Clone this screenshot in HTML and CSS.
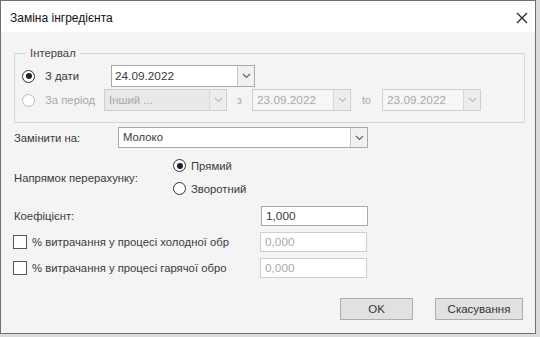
FILE: index.html
```html
<!DOCTYPE html>
<html lang="uk">

<head>
    <meta charset="UTF-8">
    <meta name="viewport" content="width=device-width, initial-scale=1.0">
    <title>Заміна інгредієнта</title>
    <link rel="stylesheet" href="styles.css">
</head>

<body>
    <div class="window">
        <div class="titlebar">
            <span class="title">Заміна інгредієнта</span>
            <span class="close">
                <svg width="12" height="12" viewBox="0 0 12 12">
                    <path d="M1 1 L11 11 M11 1 L1 11" stroke="#222" stroke-width="1.2" fill="none" />
                </svg>
            </span>
        </div>
        <div class="content">
            <fieldset class="interval">
                <legend>Інтервал</legend>
                <!-- з дати -->
                <div class="row">
                    <span class="radio checked"></span>
                    <span class="radio-label">З дати</span>
                    <div class="combo date-main">
                        <span class="combo-text">24.09.2022</span>
                        <span class="combo-btn">
                            <svg width="9" height="6" viewBox="0 0 9 6"><path d="M1 1 L4.5 4.5 L8 1" stroke="#666" stroke-width="1.2" fill="none" /></svg>
                        </span>
                    </div>
                </div>
                <!-- за період -->
                <div class="row disabled">
                    <span class="radio"></span>
                    <span class="radio-label">За період</span>
                    <div class="combo period">
                        <span class="combo-text">Інший ...</span>
                        <span class="combo-btn">
                            <svg width="9" height="6" viewBox="0 0 9 6"><path d="M1 1 L4.5 4.5 L8 1" stroke="#bbb" stroke-width="1.2" fill="none" /></svg>
                        </span>
                    </div>
                    <span class="sep">з</span>
                    <div class="combo date-small">
                        <span class="combo-text">23.09.2022</span>
                        <span class="combo-btn">
                            <svg width="9" height="6" viewBox="0 0 9 6"><path d="M1 1 L4.5 4.5 L8 1" stroke="#bbb" stroke-width="1.2" fill="none" /></svg>
                        </span>
                    </div>
                    <span class="sep to">to</span>
                    <div class="combo date-small">
                        <span class="combo-text">23.09.2022</span>
                        <span class="combo-btn">
                            <svg width="9" height="6" viewBox="0 0 9 6"><path d="M1 1 L4.5 4.5 L8 1" stroke="#bbb" stroke-width="1.2" fill="none" /></svg>
                        </span>
                    </div>
                </div>
            </fieldset>

            <div class="field replace">
                <span class="label">Замінити на:</span>
                <div class="combo product">
                    <span class="combo-text">Молоко</span>
                    <span class="combo-btn">
                        <svg width="9" height="6" viewBox="0 0 9 6"><path d="M1 1 L4.5 4.5 L8 1" stroke="#666" stroke-width="1.2" fill="none" /></svg>
                    </span>
                </div>
            </div>

            <div class="field direction">
                <span class="label">Напрямок перерахунку:</span>
                <div class="radio-group">
                    <div class="radio-item">
                        <span class="radio checked"></span>
                        <span>Прямий</span>
                    </div>
                    <div class="radio-item">
                        <span class="radio"></span>
                        <span>Зворотний</span>
                    </div>
                </div>
            </div>

            <div class="field coef">
                <span class="label">Коефіцієнт:</span>
                <div class="input">1,000</div>
            </div>

            <div class="field check-row">
                <span class="checkbox"></span>
                <span class="check-label">% витрачання у процесі холодної обр</span>
                <div class="input disabled">0,000</div>
            </div>
            <div class="field check-row">
                <span class="checkbox"></span>
                <span class="check-label">% витрачання у процесі гарячої обро</span>
                <div class="input disabled">0,000</div>
            </div>

            <div class="buttons">
                <button type="button" class="btn ok">OK</button>
                <button type="button" class="btn cancel">Скасування</button>
            </div>
        </div>
    </div>
</body>

</html>
```

FILE: styles.css
```css
html,
body {
    margin: 0;
    padding: 0;
    width: 540px;
    height: 337px;
    overflow: hidden;
    background: #dcdcdc;
    font-family: "Liberation Sans", Arial, sans-serif;
    font-size: 11.3px;
    color: #3a3a3a;
}

.window {
    width: 536px;
    height: 334px;
    box-sizing: border-box;
    border: 1px solid #707070;
    background: #f4f4f4;
    display: flex;
    flex-direction: column;
}

.titlebar {
    height: 31px;
    background: #fff;
    display: flex;
    align-items: center;
    justify-content: space-between;
    padding: 0 9px 0 9px;
    flex-shrink: 0;
}

.title {
    font-size: 12px;
    color: #111;
    margin-top: 2px;
}

.close {
    display: flex;
    margin-top: 3px;
    margin-right: -2px;
}

.content {
    padding: 15px 0 0 13px;
    flex: 1;
}

/* интервал */
.interval {
    width: 511px;
    height: 76px;
    box-sizing: border-box;
    margin: 0;
    padding: 6px 0 0 7px;
    border: 1px solid #d6d6d6;
}

.interval legend {
    padding: 0 4px;
    margin-left: 4px;
    color: #444;
}

.row {
    display: flex;
    align-items: center;
    height: 22px;
    margin-bottom: 2px;
}

.radio {
    width: 11px;
    height: 11px;
    border: 1px solid #333;
    border-radius: 50%;
    background: #fff;
    position: relative;
    flex-shrink: 0;
}

.radio.checked::after {
    content: "";
    position: absolute;
    left: 2.5px;
    top: 2.5px;
    width: 6px;
    height: 6px;
    border-radius: 50%;
    background: #222;
}

.radio-label {
    margin-left: 10px;
    width: 66px;
}

.row.disabled {
    color: #a8a8a8;
}

.row.disabled .radio {
    border-color: #bcbcbc;
}

.row.disabled .radio-label {
    width: 59px;
}

.combo {
    display: flex;
    height: 22px;
    box-sizing: border-box;
    border: 1px solid #a9a9a9;
    background: #fff;
}

.combo-text {
    flex: 1;
    padding-left: 4px;
    line-height: 20px;
    white-space: nowrap;
    overflow: hidden;
}

.combo-btn {
    width: 16px;
    border-left: 1px solid #c8c8c8;
    background: #f1f1f1;
    display: flex;
    align-items: center;
    justify-content: center;
}

.date-main {
    width: 144px;
    font-size: 11.8px;
}

.date-main .combo-text {
    padding-left: 3px;
}

.row.disabled .combo {
    border-color: #cfcfcf;
    background: #f7f7f7;
}

.row.disabled .combo-btn {
    border-left-color: #d8d8d8;
    background: #ededed;
}

.period {
    width: 123px;
}

.row.disabled .period .combo-text {
    background: #e9e9e9;
}

.sep {
    width: 25px;
    text-align: center;
    font-size: 10.5px;
}

.sep.to {
    width: 31px;
}

.date-small {
    width: 99px;
    font-size: 11.8px;
}

/* остальные поля */
.field {
    display: flex;
    align-items: center;
}

.label {
    width: 104px;
    flex-shrink: 0;
}

.replace {
    margin-top: 4px;
    height: 21px;
}

.product {
    width: 250px;
    height: 21px;
}

.product .combo-text {
    line-height: 19px;
}

.direction {
    height: 58px;
}

.direction .label {
    width: 159px;
    margin-top: 2px;
}

.radio-group {
    display: flex;
    flex-direction: column;
    gap: 10px;
}

.radio-item {
    display: flex;
    align-items: center;
    gap: 5px;
}

.coef {
    height: 20px;
}

.coef .label {
    width: 247px;
}

.input {
    width: 107px;
    height: 20px;
    box-sizing: border-box;
    border: 1px solid #a9a9a9;
    background: #fff;
    padding-left: 4px;
    line-height: 18px;
    font-size: 11.8px;
}

.input.disabled {
    border-color: #cfcfcf;
    color: #aaa;
}

.check-row {
    height: 20px;
    margin-top: 6px;
}

.checkbox {
    width: 12px;
    height: 12px;
    border: 1px solid #555;
    background: #fff;
    flex-shrink: 0;
    margin-left: -1px;
}

.check-label {
    width: 228px;
    flex-shrink: 0;
    margin-left: 5px;
    white-space: nowrap;
}

.buttons {
    display: flex;
    justify-content: flex-end;
    gap: 22px;
    margin-top: 20px;
    padding-right: 12px;
}

.btn {
    height: 22px;
    margin: 0;
    padding: 0;
    font-family: inherit;
    font-size: 11.5px;
    color: #333;
    background: #e1e1e1;
    border: 1px solid #adadad;
}

.ok {
    width: 73px;
}

.cancel {
    width: 88px;
}
```
